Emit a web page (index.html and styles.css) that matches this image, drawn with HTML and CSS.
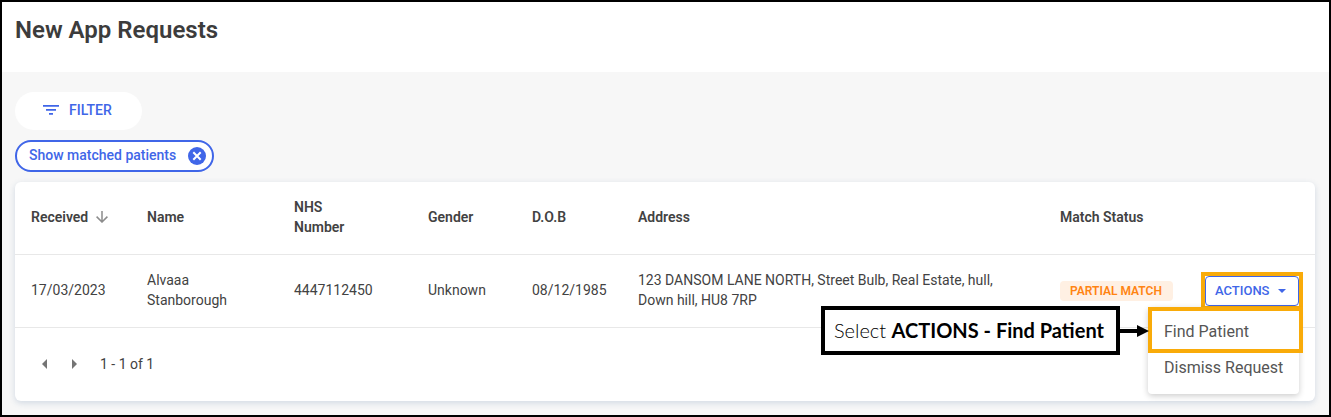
FILE: index.html
```
<!DOCTYPE html>
<html lang="en">
<head>
    <meta charset="UTF-8">
    <meta name="viewport" content="width=device-width, initial-scale=1.0">
    <title>New App Requests</title>
    <link rel="stylesheet" href="styles.css">
</head>
<body>
    <header class="page-header">
        <h1>New App Requests</h1>
    </header>
    <main class="content">
        <button type="button" class="filter-btn">
            <svg width="16" height="10" viewBox="0 0 16 10" fill="currentColor" aria-hidden="true">
                <path d="M0 0h16v1.7H0zM3 4h10v1.7H3zM6 8h4v1.7H6z"/>
            </svg>
            FILTER
        </button>
        <div class="chip">
            <span>Show matched patients</span>
            <button type="button" class="chip-remove" aria-label="Remove filter">
                <svg width="18" height="18" viewBox="0 0 18 18" aria-hidden="true">
                    <circle cx="9" cy="9" r="9" fill="#4066e8"/>
                    <path d="M5.3 5.3l7.4 7.4M12.7 5.3l-7.4 7.4" stroke="#fff" stroke-width="2"/>
                </svg>
            </button>
        </div>

        <section class="card">
            <table class="requests">
                <thead>
                    <tr>
                        <th class="col-received">
                            <span class="sort">Received
                                <svg width="12" height="12" viewBox="0 0 12 12" fill="none" stroke="#8c8c8c" stroke-width="1.5" aria-hidden="true">
                                    <path d="M6 0v11M0.6 5.6L6 11l5.4-5.4"/>
                                </svg>
                            </span>
                        </th>
                        <th class="col-name">Name</th>
                        <th class="col-nhs">NHS<br>Number</th>
                        <th class="col-gender">Gender</th>
                        <th class="col-dob">D.O.B</th>
                        <th>Address</th>
                        <th class="col-status">Match Status</th>
                        <th class="col-actions"></th>
                    </tr>
                </thead>
                <tbody>
                    <tr>
                        <td>17/03/2023</td>
                        <td>Alvaaa Stanborough</td>
                        <td>4447112450</td>
                        <td>Unknown</td>
                        <td>08/12/1985</td>
                        <td>123 DANSOM LANE NORTH, Street Bulb, Real Estate, hull, Down hill, HU8 7RP</td>
                        <td><span class="badge">PARTIAL MATCH</span></td>
                        <td class="actions-cell">
                            <div class="actions">
                                <button type="button" class="actions-btn" aria-expanded="true">
                                    ACTIONS
                                    <svg width="8" height="4" viewBox="0 0 8 4" fill="currentColor" aria-hidden="true"><path d="M0 0h8L4 4z"/></svg>
                                </button>
                                <div class="menu">
                                    <button type="button" class="menu-item">Find Patient</button>
                                    <button type="button" class="menu-item">Dismiss Request</button>
                                    <div class="menu-highlight"></div>
                                </div>
                                <div class="callout">
                                    <p>Select <strong>ACTIONS - Find Patient</strong></p>
                                    <svg width="29" height="12" viewBox="0 0 29 12" aria-hidden="true"><path d="M0 4h17V0l12 6-12 6V8H0z"/></svg>
                                </div>
                            </div>
                        </td>
                    </tr>
                </tbody>
            </table>
            <nav class="pagination" aria-label="Pagination">
                <button type="button" aria-label="Previous page">
                    <svg width="5" height="10" viewBox="0 0 5 10" fill="#757575"><path d="M5 0v10L0 5z"/></svg>
                </button>
                <button type="button" aria-label="Next page">
                    <svg width="5" height="10" viewBox="0 0 5 10" fill="#757575"><path d="M0 0v10l5-5z"/></svg>
                </button>
                <span>1 - 1 of 1</span>
            </nav>
        </section>
    </main>
</body>
</html>
```
FILE: styles.css
```
* {
    box-sizing: border-box;
}
body {
    margin: 0;
    min-height: 100vh;
    border: 2px solid #000;
    background-color: #f7f7f7;
    color: #424242;
    font-family: Roboto, Arial, sans-serif;
    font-size: 14px;
    line-height: 20px;
}
button {
    margin: 0;
    padding: 0;
    border: none;
    background: none;
    font: inherit;
    color: inherit;
    cursor: pointer;
}
svg {
    display: block;
    flex: none;
}
.page-header {
    padding: 14px 13px 28px;
    background-color: #fff;
}
h1 {
    margin: 0;
    font-size: 24px;
    line-height: 28px;
    font-weight: 600;
    color: #3c3c3c;
}
.content {
    display: flex;
    flex-direction: column;
    align-items: flex-start;
    gap: 10px;
    padding: 20px 14px 14px 13px;
}
.filter-btn {
    display: flex;
    align-items: center;
    gap: 10px;
    height: 38px;
    padding: 0 30px 2px 28px;
    border-radius: 19px;
    background-color: #fff;
    color: #4066e8;
    font-weight: 500;
}
.chip {
    display: flex;
    align-items: center;
    gap: 12px;
    height: 32px;
    padding: 0 6px 0 12px;
    border: 2px solid #4066e8;
    border-radius: 16px;
    background-color: #fff;
    color: #4066e8;
    font-weight: 500;
}
.chip span {
    padding-bottom: 2px;
}
.card {
    width: 100%;
    border-radius: 6px;
    background-color: #fff;
    box-shadow: 0 2px 6px rgba(60, 100, 150, 0.2);
}
.requests {
    width: 100%;
    table-layout: fixed;
    border-collapse: separate;
    border-spacing: 0;
}
.requests th,
.requests td {
    padding: 15px 16px 17px;
    border-bottom: 1px solid #e8e8e8;
    text-align: left;
    vertical-align: middle;
}
.requests th {
    font-weight: 600;
    white-space: nowrap;
}
.requests .actions-cell {
    padding: 16px;
}
.col-received { width: 116px; }
.col-name { width: 147px; }
.col-nhs { width: 134px; }
.col-gender { width: 104px; }
.col-dob { width: 106px; }
.col-status { width: 145px; }
.col-actions { width: 126px; }
.sort {
    display: flex;
    align-items: center;
    gap: 8px;
}
.badge {
    display: inline-block;
    padding: 0 11px 0 10px;
    border-radius: 4px;
    background-color: #fff0e3;
    color: #ff8412;
    font-size: 12px;
    font-weight: 600;
    white-space: nowrap;
}
.actions {
    position: relative;
    outline: 4px solid #f9ab09;
}
.actions-btn {
    display: flex;
    align-items: center;
    justify-content: space-between;
    width: 100%;
    height: 30px;
    padding: 0 12px 0 9px;
    border: 1px solid #4066e8;
    border-radius: 4px;
    background-color: #fff;
    color: #4066e8;
    font-size: 13px;
    font-weight: 500;
}
.menu {
    position: absolute;
    top: 31px;
    right: 0;
    width: 151px;
    padding: 7px 0 8px;
    border-radius: 4px;
    background-color: #fff;
    box-shadow: 0 2px 6px rgba(0, 0, 0, 0.2);
}
.menu-item {
    display: block;
    width: 100%;
    padding: 8px 16px;
    font-size: 16px;
    color: #555;
    text-align: left;
    white-space: nowrap;
}
.menu-highlight {
    position: absolute;
    top: 0;
    left: 0;
    right: -4px;
    height: 46px;
    border: 4px solid #f9ab09;
}
.callout {
    position: absolute;
    top: 30px;
    right: 150px;
    display: flex;
    align-items: center;
    color: #000;
    white-space: nowrap;
}
.callout p {
    margin: 0;
    padding: 10px 12px 11px 9px;
    border: 4px solid #000;
    background-color: #fff;
    font-family: "Century Gothic", Lato, sans-serif;
    font-size: 20px;
    font-weight: 300;
}
.callout strong {
    font-weight: 700;
}
.pagination {
    display: flex;
    align-items: center;
    height: 73px;
    padding: 0 14px 2px;
}
.pagination button {
    display: flex;
    align-items: center;
    justify-content: center;
    width: 30px;
    height: 30px;
}
.pagination span {
    margin-left: 11px;
}
```
